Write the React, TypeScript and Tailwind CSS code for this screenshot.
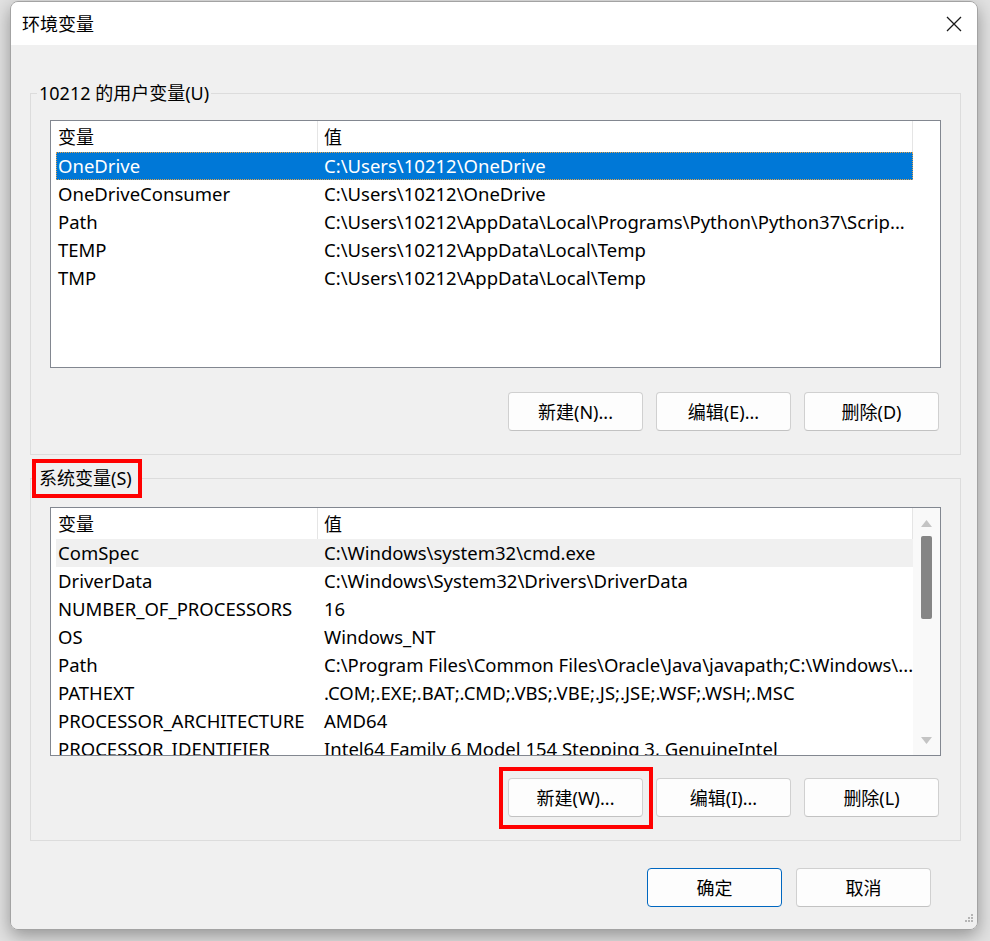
import React from 'react'

const FONT = '"Noto Sans", "Noto Sans CJK SC", sans-serif'

type Row = { name: string; value: string }

const userVars: Row[] = [
  { name: 'OneDrive', value: 'C:\\Users\\10212\\OneDrive' },
  { name: 'OneDriveConsumer', value: 'C:\\Users\\10212\\OneDrive' },
  { name: 'Path', value: 'C:\\Users\\10212\\AppData\\Local\\Programs\\Python\\Python37\\Scrip...' },
  { name: 'TEMP', value: 'C:\\Users\\10212\\AppData\\Local\\Temp' },
  { name: 'TMP', value: 'C:\\Users\\10212\\AppData\\Local\\Temp' },
]

const systemVars: Row[] = [
  { name: 'ComSpec', value: 'C:\\Windows\\system32\\cmd.exe' },
  { name: 'DriverData', value: 'C:\\Windows\\System32\\Drivers\\DriverData' },
  { name: 'NUMBER_OF_PROCESSORS', value: '16' },
  { name: 'OS', value: 'Windows_NT' },
  { name: 'Path', value: 'C:\\Program Files\\Common Files\\Oracle\\Java\\javapath;C:\\Windows\\...' },
  { name: 'PATHEXT', value: '.COM;.EXE;.BAT;.CMD;.VBS;.VBE;.JS;.JSE;.WSF;.WSH;.MSC' },
  { name: 'PROCESSOR_ARCHITECTURE', value: 'AMD64' },
  { name: 'PROCESSOR_IDENTIFIER', value: 'Intel64 Family 6 Model 154 Stepping 3, GenuineIntel' },
]

function Button({ label, primary }: { label: string; primary?: boolean }) {
  return (
    <button
      className={`w-[135px] h-[39px] rounded-[4px] border bg-[#fdfdfd] text-[18px] leading-[24px] text-black flex items-center justify-center ${
        primary ? 'border-[#0067c0]' : 'border-[#d0d0d0] border-b-[#c2c2c2]'
      }`}
    >
      {label}
    </button>
  )
}

function Scrollbar() {
  return (
    <div className="w-[27px] bg-[#f9f9f9] flex flex-col items-center pt-[12px] pb-[11px]">
      <svg width="11" height="7" viewBox="0 0 11 7">
        <path d="M5.5 0 L11 7 L0 7 Z" fill="#c4c4c4" />
      </svg>
      <div className="mt-[9px] w-[11px] h-[83px] rounded-[2px] bg-[#858585]" />
      <div className="flex-1" />
      <svg width="11" height="7" viewBox="0 0 11 7">
        <path d="M0 0 L11 0 L5.5 7 Z" fill="#c4c4c4" />
      </svg>
    </div>
  )
}

function ListView({
  rows,
  height,
  selected,
  hovered,
  scroll,
}: {
  rows: Row[]
  height: string
  selected?: number
  hovered?: number
  scroll?: boolean
}) {
  return (
    <div className={`w-[891px] ${height} border border-[#828790] bg-white flex overflow-hidden`}>
      <div className="w-[862px] overflow-hidden">
        {/* header */}
        <div className="flex h-[31px] text-[18px] leading-[24px]">
          <div className="w-[266px] pl-[7px] flex items-center">变量</div>
          <div className="w-[596px] pl-[6px] flex items-center border-l border-r border-[#e5e5e5]">值</div>
        </div>
        <div className="pl-[5px]">
          {rows.map((r, i) => {
            const isSel = i === selected
            const isHover = i === hovered
            return (
              <div
                key={r.name}
                className={`flex h-[28px] w-[857px] items-center text-[18.5px] leading-[24px] whitespace-nowrap ${
                  isSel
                    ? 'bg-[#0078d7] text-white outline outline-1 outline-dotted outline-offset-[-1px] outline-[#e3a24a]'
                    : isHover
                      ? 'bg-[#f0f0f0] text-black'
                      : 'text-black'
                }`}
              >
                <div className="w-[261px] pl-[2px] overflow-hidden">{r.name}</div>
                <div className="flex-1 pl-[7px] overflow-hidden">{r.value}</div>
              </div>
            )
          })}
        </div>
      </div>
      {scroll ? <Scrollbar /> : <div className="w-[27px]" />}
    </div>
  )
}

export default function App() {
  return (
    <div
      className="w-[990px] h-[941px] bg-[#e2e2e2] pl-[10px] pt-[1px] overflow-hidden"
      style={{ fontFamily: FONT }}
    >
      <div className="relative w-[968px] h-[929px] rounded-[8px] border border-[#a3a3a3] overflow-hidden flex flex-col shadow-[0_6px_18px_rgba(0,0,0,0.35)]">
        {/* Title bar */}
        <div className="h-[43px] bg-white flex items-center justify-between pl-[11px] pr-[15px]">
          <span className="text-[18px] leading-[24px] text-black">环境变量</span>
          <svg width="16" height="16" viewBox="0 0 16 16">
            <path d="M1 1 L15 15 M15 1 L1 15" stroke="#1a1a1a" strokeWidth="1.3" />
          </svg>
        </div>

        {/* Body */}
        <div className="flex-1 bg-[#f0f0f0] pl-[19px] pt-[36px] text-black">
          {/* User variables */}
          <fieldset className="w-[930px] border border-[#dcdcdc] m-0 p-0">
            <legend className="ml-[6px] px-[2px] text-[18px] leading-[24px]">10212 的用户变量(U)</legend>
            <div className="px-[19px] pt-[15px] pb-[23px]">
              <ListView rows={userVars} height="h-[248px]" selected={0} />
              <div className="mt-[24px] w-[891px] pr-[2px] flex justify-end gap-[13px]">
                <Button label="新建(N)..." />
                <Button label="编辑(E)..." />
                <Button label="删除(D)" />
              </div>
            </div>
          </fieldset>

          {/* System variables */}
          <fieldset className="mt-[4px] w-[930px] border border-[#dcdcdc] m-0 p-0">
            <legend className="ml-[1px] border-4 border-[#ff0000] pl-[3px] pr-[6px] py-[3px] text-[18px] leading-[25px]">
              系统变量(S)
            </legend>
            <div className="px-[19px] pt-[9px] pb-[23px]">
              <ListView rows={systemVars} height="h-[249px]" hovered={0} scroll />
              <div className="mt-[22px] w-[891px] pr-[2px] flex justify-end gap-[13px]">
                <div className="relative">
                  <Button label="新建(W)..." />
                  <span className="absolute -left-[9px] -right-[10px] -top-[11px] -bottom-[12px] border-4 border-[#ff0000] pointer-events-none z-10" />
                </div>
                <Button label="编辑(I)..." />
                <Button label="删除(L)" />
              </div>
            </div>
          </fieldset>

          {/* Dialog buttons */}
          <div className="mt-[27px] pr-[46px] flex justify-end gap-[14px]">
            <Button label="确定" primary />
            <Button label="取消" />
          </div>
        </div>

        {/* Resize grip */}
        <svg className="absolute right-[3px] bottom-[3px]" width="12" height="12" viewBox="0 0 12 12">
          <rect x="9" y="0" width="2" height="2" fill="#b5b5b5" />
          <rect x="6" y="3" width="2" height="2" fill="#b5b5b5" />
          <rect x="9" y="3" width="2" height="2" fill="#b5b5b5" />
          <rect x="3" y="6" width="2" height="2" fill="#b5b5b5" />
          <rect x="6" y="6" width="2" height="2" fill="#b5b5b5" />
          <rect x="9" y="6" width="2" height="2" fill="#b5b5b5" />
        </svg>
      </div>
    </div>
  )
}
